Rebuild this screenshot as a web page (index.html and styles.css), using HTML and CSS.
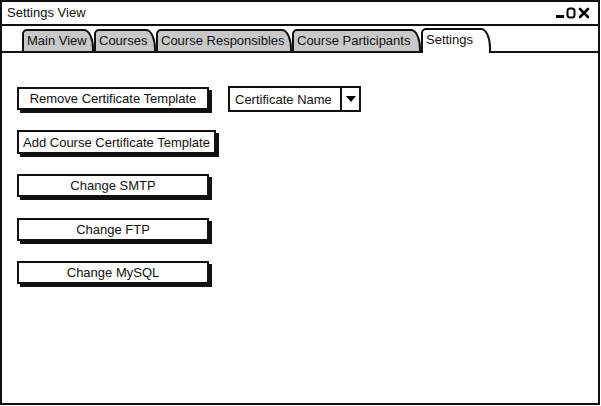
FILE: index.html
```html
<!DOCTYPE html>
<html>
<head>
<meta charset="utf-8">
<link rel="stylesheet" href="styles.css">
</head>
<body>
<div class="window">
  <div class="titlebar">
    <span class="title">Settings View</span>
    <svg class="controls" width="38" height="14" viewBox="0 0 38 14">
      <rect x="1" y="9" width="8" height="3" fill="#000"/>
      <rect x="12.5" y="2.5" width="7" height="9" rx="2.5" fill="none" stroke="#000" stroke-width="2"/>
      <path d="M25 3 L33 11 M33 3 L25 11" stroke="#000" stroke-width="2.6" stroke-linecap="round"/>
    </svg>
  </div>
  <div class="tabbar">
    <div class="tab tab-main">Main View</div>
    <div class="tab tab-courses">Courses</div>
    <div class="tab tab-resp">Course Responsibles</div>
    <div class="tab tab-part">Course Participants</div>
    <div class="tab tab-settings active">Settings</div>
  </div>
  <div class="panel">
    <div class="row">
      <button class="btn">Remove Certificate Template</button>
      <div class="combo">
        <span class="combo-text">Certificate Name</span>
        <span class="combo-arrow"><svg width="10" height="6" viewBox="0 0 10 6"><path d="M0 0 L10 0 L5 6 Z" fill="#000"/></svg></span>
      </div>
    </div>
    <div class="row">
      <button class="btn wide">Add Course Certificate Template</button>
    </div>
    <div class="row">
      <button class="btn">Change SMTP</button>
    </div>
    <div class="row">
      <button class="btn">Change FTP</button>
    </div>
    <div class="row">
      <button class="btn">Change MySQL</button>
    </div>
  </div>
</div>
</body>
</html>
```

FILE: styles.css
```css
html, body {
  margin: 0;
  padding: 0;
  background: #fff;
}
body {
  font-family: "Liberation Sans", Arial, sans-serif;
  font-size: 13px;
  color: #111;
}
.window {
  width: 600px;
  height: 405px;
  box-sizing: border-box;
  border: 2px solid #111;
  display: flex;
  flex-direction: column;
}
.titlebar {
  height: 22px;
  border-bottom: 2px solid #111;
  display: flex;
  align-items: center;
  justify-content: space-between;
  padding: 0 5px 0 5px;
}
.title {
  line-height: 1;
  margin-top: -1px;
}
.controls {
  display: block;
  margin-top: -1px;
}
.tabbar {
  height: 25px;
  display: flex;
  align-items: flex-end;
  padding-left: 20px;
  border-bottom: 2px solid #111;
}
.tab {
  height: 22px;
  box-sizing: border-box;
  border: 2px solid #111;
  border-bottom: none;
  border-radius: 5px 10px 0 0 / 5px 20px 0 0;
  background: #c8c8c8;
  padding: 0 0 0 3px;
  line-height: 19px;
  white-space: nowrap;
  overflow: hidden;
  flex: none;
}
.tab-main { width: 72px; }
.tab-courses { width: 62px; }
.tab-resp { width: 136px; }
.tab-part { width: 129px; }
.tab-settings { width: 70px; }
.tab.active {
  background: #fff;
  height: 25px;
  margin-bottom: -2px;
  line-height: 20px;
  position: relative;
}
.panel {
  flex: 1;
  padding: 34px 0 0 15px;
  display: flex;
  flex-direction: column;
  gap: 20.5px;
}
.row {
  display: flex;
  align-items: center;
  gap: 19px;
  height: 23px;
}
.btn {
  font: inherit;
  color: inherit;
  width: 192px;
  height: 23px;
  box-sizing: border-box;
  border: 2px solid #111;
  background: #fff;
  box-shadow: 3px 3px 0 #111;
  padding: 0 2px;
  margin: 0;
  text-align: center;
  white-space: nowrap;
}
.btn.wide {
  width: 199px;
  height: 24px;
}
.combo {
  height: 26px;
  box-sizing: border-box;
  border: 2px solid #111;
  display: flex;
  align-items: stretch;
  margin-top: 1px;
  background: #fff;
}
.combo-text {
  display: flex;
  align-items: center;
  padding: 0 5px 0 5px;
  width: 100px;
}
.combo-arrow {
  width: 17px;
  border-left: 2px solid #111;
  display: flex;
  align-items: center;
  justify-content: center;
}
.combo-arrow svg {
  display: block;
}
```
